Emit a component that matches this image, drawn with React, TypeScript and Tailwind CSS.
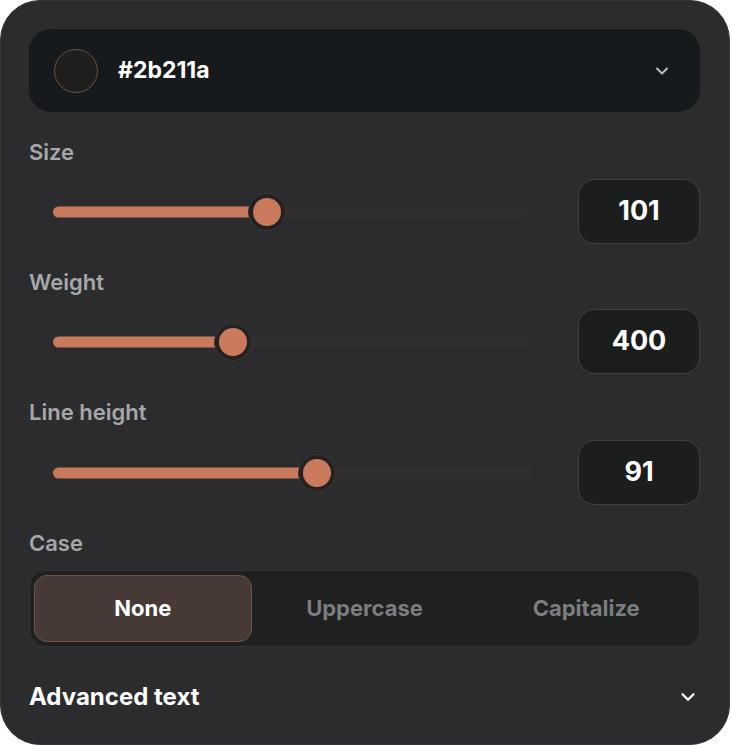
import React, { useState } from 'react';
import { ChevronDown } from 'lucide-react';

type SliderRow = { label: string; value: number; pct: number };

const rows: SliderRow[] = [
  { label: 'Size', value: 101, pct: 44.7 },
  { label: 'Weight', value: 400, pct: 37.6 },
  { label: 'Line height', value: 91, pct: 55.3 },
];

const cases = ['None', 'Uppercase', 'Capitalize'];

const Slider: React.FC<{ pct: number }> = ({ pct }) => (
  <div className="relative h-[38px] flex-1 flex items-center">
    <div className="h-[11px] w-full rounded-full bg-[#302e2e]" />
    <div
      className="absolute left-0 top-1/2 h-[11px] -translate-y-1/2 rounded-full bg-[#c97a5c]"
      style={{ width: `${pct}%` }}
    />
    <div
      className="absolute top-1/2 size-[38px] -translate-x-1/2 -translate-y-1/2 rounded-full border border-[#3d3331] bg-[#232223] flex items-center justify-center"
      style={{ left: `${pct}%` }}
    >
      <div className="size-[28px] rounded-full bg-[#c97a5c]" />
    </div>
  </div>
);

const App: React.FC = () => {
  const [activeCase, setActiveCase] = useState('None');

  return (
    <div className="min-h-[745px] w-[732px] bg-white" style={{ fontFamily: 'Inter, "Liberation Sans", sans-serif' }}>
      <div className="h-[745px] w-[730px] rounded-[40px] border border-[#3b3432] bg-[#2c2c2e] pl-[28px] pr-[29px] pt-[28px]">
        {/* colour picker */}
        <div className="flex h-[83px] items-center rounded-[22px] bg-[#171a1c] pl-[25px] pr-[28px]">
          <div className="size-[44px] rounded-full border-[1.5px] border-[#6b5046] bg-[#1f1e1c]" />
          <span className="ml-[20px] text-[23px] font-bold text-white">#2b211a</span>
          <ChevronDown size={20} strokeWidth={2.5} className="ml-auto text-[#b8b9ba]" />
        </div>

        {rows.map((row, i) => (
          <div key={row.label} className={i === 0 ? 'mt-[27px]' : 'mt-[25px]'}>
            <div className="text-[22px] font-semibold leading-[26px] text-[#a5a8a9]">{row.label}</div>
            <div className={`${i === 2 ? 'mt-[15px]' : 'mt-[14px]'} flex items-center gap-[47px]`}>
              <div className="ml-[24px] flex flex-1">
                <Slider pct={row.pct} />
              </div>
              <div className="flex h-[65px] w-[122px] items-center justify-center rounded-[16px] border border-[#4a3c38] bg-[#1c1e1e] text-[27px] font-bold text-white">
                {row.value}
              </div>
            </div>
          </div>
        ))}

        <div className="mt-[25px] text-[22px] font-semibold leading-[26px] text-[#a5a8a9]">Case</div>
        <div className="mt-[14px] grid h-[77px] grid-cols-3 gap-[4px] rounded-[16px] border border-[#353232] bg-[#1f2020] p-[4px]">
          {cases.map(c => (
            <button
              key={c}
              onClick={() => setActiveCase(c)}
              className={
                activeCase === c
                  ? 'rounded-[13px] border border-[#74544a] bg-[#463936] text-[22px] font-bold text-white'
                  : 'rounded-[13px] border border-transparent text-[22px] font-bold text-[#7b7d7f]'
              }
            >
              {c}
            </button>
          ))}
        </div>

        <div className="mt-[35px] flex h-[30px] items-center justify-between pr-[1px]">
          <span className="text-[24px] font-bold leading-[30px] text-white">Advanced text</span>
          <ChevronDown size={22} strokeWidth={2.5} className="text-white" />
        </div>
      </div>
    </div>
  );
};

export default App;
